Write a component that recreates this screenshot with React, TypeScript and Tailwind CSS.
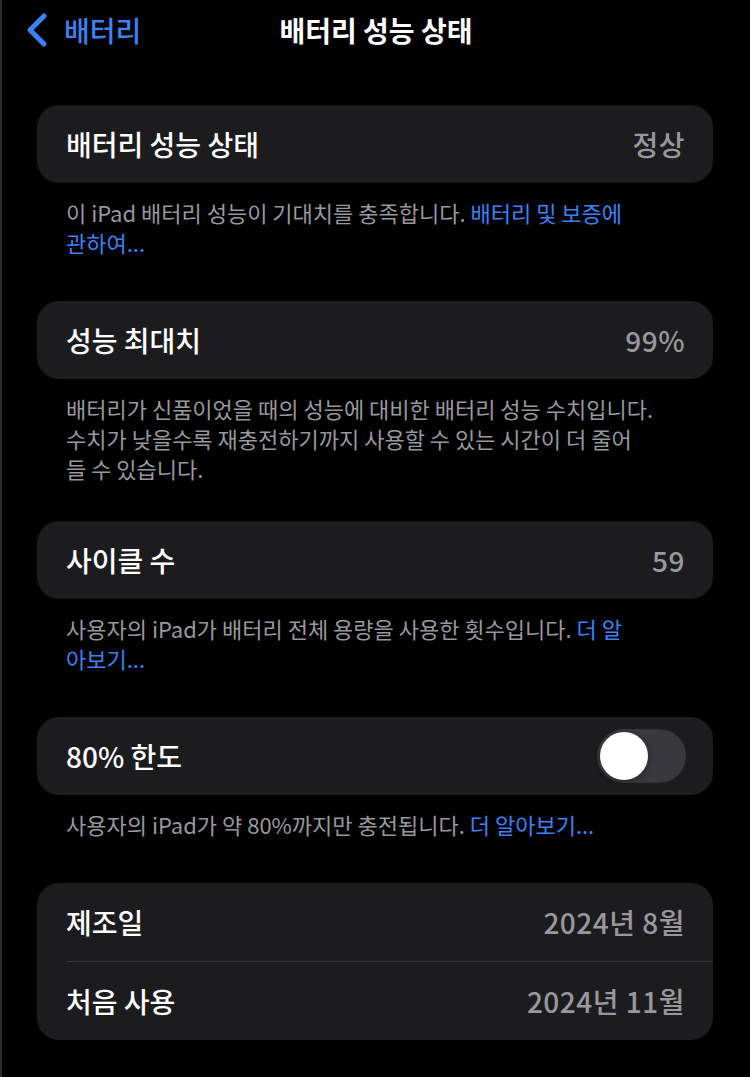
import React from "react"

const font = { fontFamily: '"Noto Sans CJK KR", "Noto Sans", sans-serif' }

function Card({ children }: { children: React.ReactNode }) {
  return <div className="ml-[35px] mr-[37px] rounded-[22px] bg-[#1c1c1e]">{children}</div>
}

function Row({ label, value }: { label: string; value: React.ReactNode }) {
  return (
    <div className="flex h-[78px] items-center justify-between pl-[29px] pr-[28px]">
      <span className="text-[28px] font-medium text-white">{label}</span>
      <span className="text-[28px] font-medium tracking-[0.5px] text-[#98989e]">{value}</span>
    </div>
  )
}

function Note({ children, mb = "mb-[44px]" }: { children: React.ReactNode; mb?: string }) {
  return (
    <p className={`ml-[64px] pt-[14px] text-[22px] leading-[30px] text-[#98989e] ${mb}`}>{children}</p>
  )
}

function Link({ children }: { children: React.ReactNode }) {
  return <span className="text-[#3b82f6]">{children}</span>
}

export default function App() {
  return (
    <div className="min-h-[1077px] w-[750px] border-l-2 border-[#2c2c2e] bg-black" style={font}>
      <div className="relative flex h-[60px] items-center">
        <div className="flex items-center gap-[14px] pl-[22px]">
          <svg width="26" height="36" viewBox="0 0 26 36" fill="none">
            <path d="M20 4 L6 18 L20 32" stroke="#3a82f6" strokeWidth="5" strokeLinecap="round" strokeLinejoin="round" />
          </svg>
          <span className="text-[28px] font-medium text-[#3a82f6]">배터리</span>
        </div>
        <div className="pointer-events-none absolute left-0 right-0 text-center text-[28px] font-semibold text-white">
          배터리 성능 상태
        </div>
      </div>

      <div className="pt-[45px]">
        <Card>
          <Row label="배터리 성능 상태" value="정상" />
        </Card>
        <Note>
          이 iPad 배터리 성능이 기대치를 충족합니다. <Link>배터리 및 보증에</Link>
          <br />
          <Link>관하여...</Link>
        </Note>

        <Card>
          <Row label="성능 최대치" value="99%" />
        </Card>
        <Note mb="mb-[38px]">
          배터리가 신품이었을 때의 성능에 대비한 배터리 성능 수치입니다.
          <br />
          수치가 낮을수록 재충전하기까지 사용할 수 있는 시간이 더 줄어
          <br />
          들 수 있습니다.
        </Note>

        <Card>
          <Row label="사이클 수" value="59" />
        </Card>
        <Note>
          사용자의 iPad가 배터리 전체 용량을 사용한 횟수입니다. <Link>더 알</Link>
          <br />
          <Link>아보기...</Link>
        </Note>

        <Card>
          <div className="flex h-[78px] items-center justify-between pl-[29px] pr-[27px]">
            <span className="text-[28px] font-medium text-white">80% 한도</span>
            <div className="flex h-[54px] w-[89px] items-center rounded-full bg-[#39393d] p-[3px]">
              <div className="h-[48px] w-[48px] rounded-full bg-white shadow-[0_2px_6px_rgba(0,0,0,0.35)]" />
            </div>
          </div>
        </Card>
        <Note>
          사용자의 iPad가 약 80%까지만 충전됩니다. <Link>더 알아보기...</Link>
        </Note>

        <Card>
          <Row label="제조일" value="2024년 8월" />
          <div className="ml-[29px] h-px bg-[#38383a]" />
          <Row label="처음 사용" value="2024년 11월" />
        </Card>
      </div>
    </div>
  )
}
